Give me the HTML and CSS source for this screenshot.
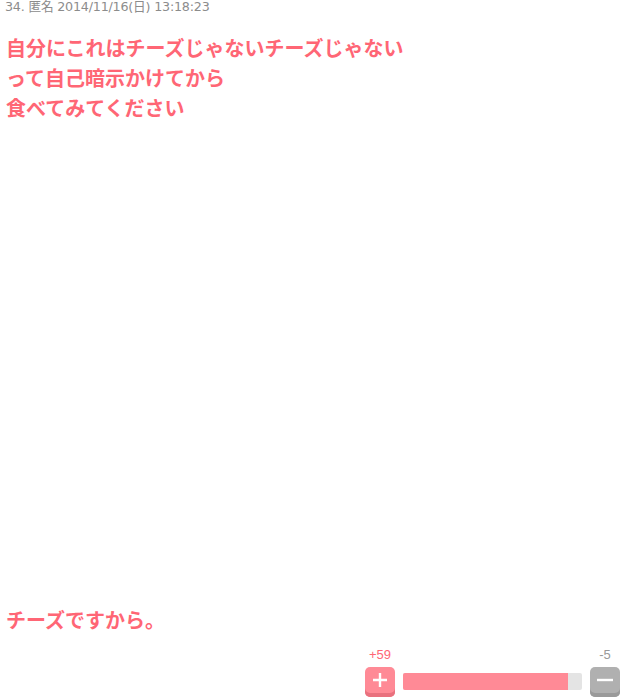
FILE: index.html
```html
<!DOCTYPE html>
<html lang="ja">
<head>
<meta charset="utf-8">
<title>34. 匿名</title>
<link rel="stylesheet" href="styles.css">
</head>
<body>
<article class="comment">
  <div class="comment-meta">34. 匿名 2014/11/16(日) 13:18:23</div>
  <div class="comment-body">
    <p class="line">自分にこれはチーズじゃないチーズじゃない</p>
    <p class="line">って自己暗示かけてから</p>
    <p class="line">食べてみてください</p>
    <div class="media-space"></div>
    <p class="line">チーズですから。</p>
  </div>
  <div class="vote">
    <div class="vote-col">
      <span class="count count-plus">+59</span>
      <button class="vote-btn vote-plus" aria-label="plus">
        <svg width="16" height="16" viewBox="0 0 16 16"><path d="M8 1v14M1 8h14" stroke="#fff" stroke-width="2.4" fill="none"/></svg>
      </button>
    </div>
    <div class="vote-bar"><div class="vote-fill" style="width:92%"></div></div>
    <div class="vote-col">
      <span class="count count-minus">-5</span>
      <button class="vote-btn vote-minus" aria-label="minus">
        <svg width="18" height="16" viewBox="0 0 18 16"><path d="M1 8h16" stroke="#fff" stroke-width="2.4" fill="none"/></svg>
      </button>
    </div>
  </div>
</article>
</body>
</html>
```

FILE: styles.css
```css
html, body {
  margin: 0;
  padding: 0;
  background: #fff;
}

.comment {
  width: 626px;
  height: 697px;
  overflow: hidden;
  font-family: "Noto Sans CJK JP", sans-serif;
}

.comment-meta {
  padding: 0 5px;
  height: 16px;
  font-family: "DejaVu Sans", "Noto Sans CJK JP", sans-serif;
  font-size: 12.7px;
  line-height: 14px;
  color: #8c8c8c;
  letter-spacing: -0.2px;
}

.comment-body {
  padding: 17px 6px 0;
  color: #ff6675;
  font-weight: 700;
  font-size: 20px;
  line-height: 30px;
}

.line {
  margin: 0;
}

.media-space {
  height: 482px;
}

.vote {
  display: flex;
  justify-content: flex-end;
  align-items: flex-end;
  gap: 8px;
  padding: 13px 6px 0 0;
}

.vote-col {
  display: flex;
  flex-direction: column;
  align-items: center;
  width: 30px;
}

.count {
  font-family: "Liberation Sans", sans-serif;
  font-size: 13px;
  line-height: 13px;
  height: 19px;
}

.count-plus { color: #ff6675; }
.count-minus { color: #999; }

.vote-btn {
  width: 30px;
  height: 30px;
  border: none;
  border-radius: 5px;
  padding: 0 0 4px;
  display: flex;
  align-items: center;
  justify-content: center;
  cursor: pointer;
}

.vote-plus {
  background: #ff8a96;
  box-shadow: inset 0 -4px 0 #e9717e;
}

.vote-minus {
  background: #b0b0b0;
  box-shadow: inset 0 -4px 0 #9a9a9a;
}

.vote-bar {
  width: 179px;
  height: 17px;
  margin-bottom: 7px;
  background: #e4e4e4;
  border-radius: 2px;
  overflow: hidden;
}

.vote-fill {
  height: 100%;
  background: #ff8a96;
}
```
